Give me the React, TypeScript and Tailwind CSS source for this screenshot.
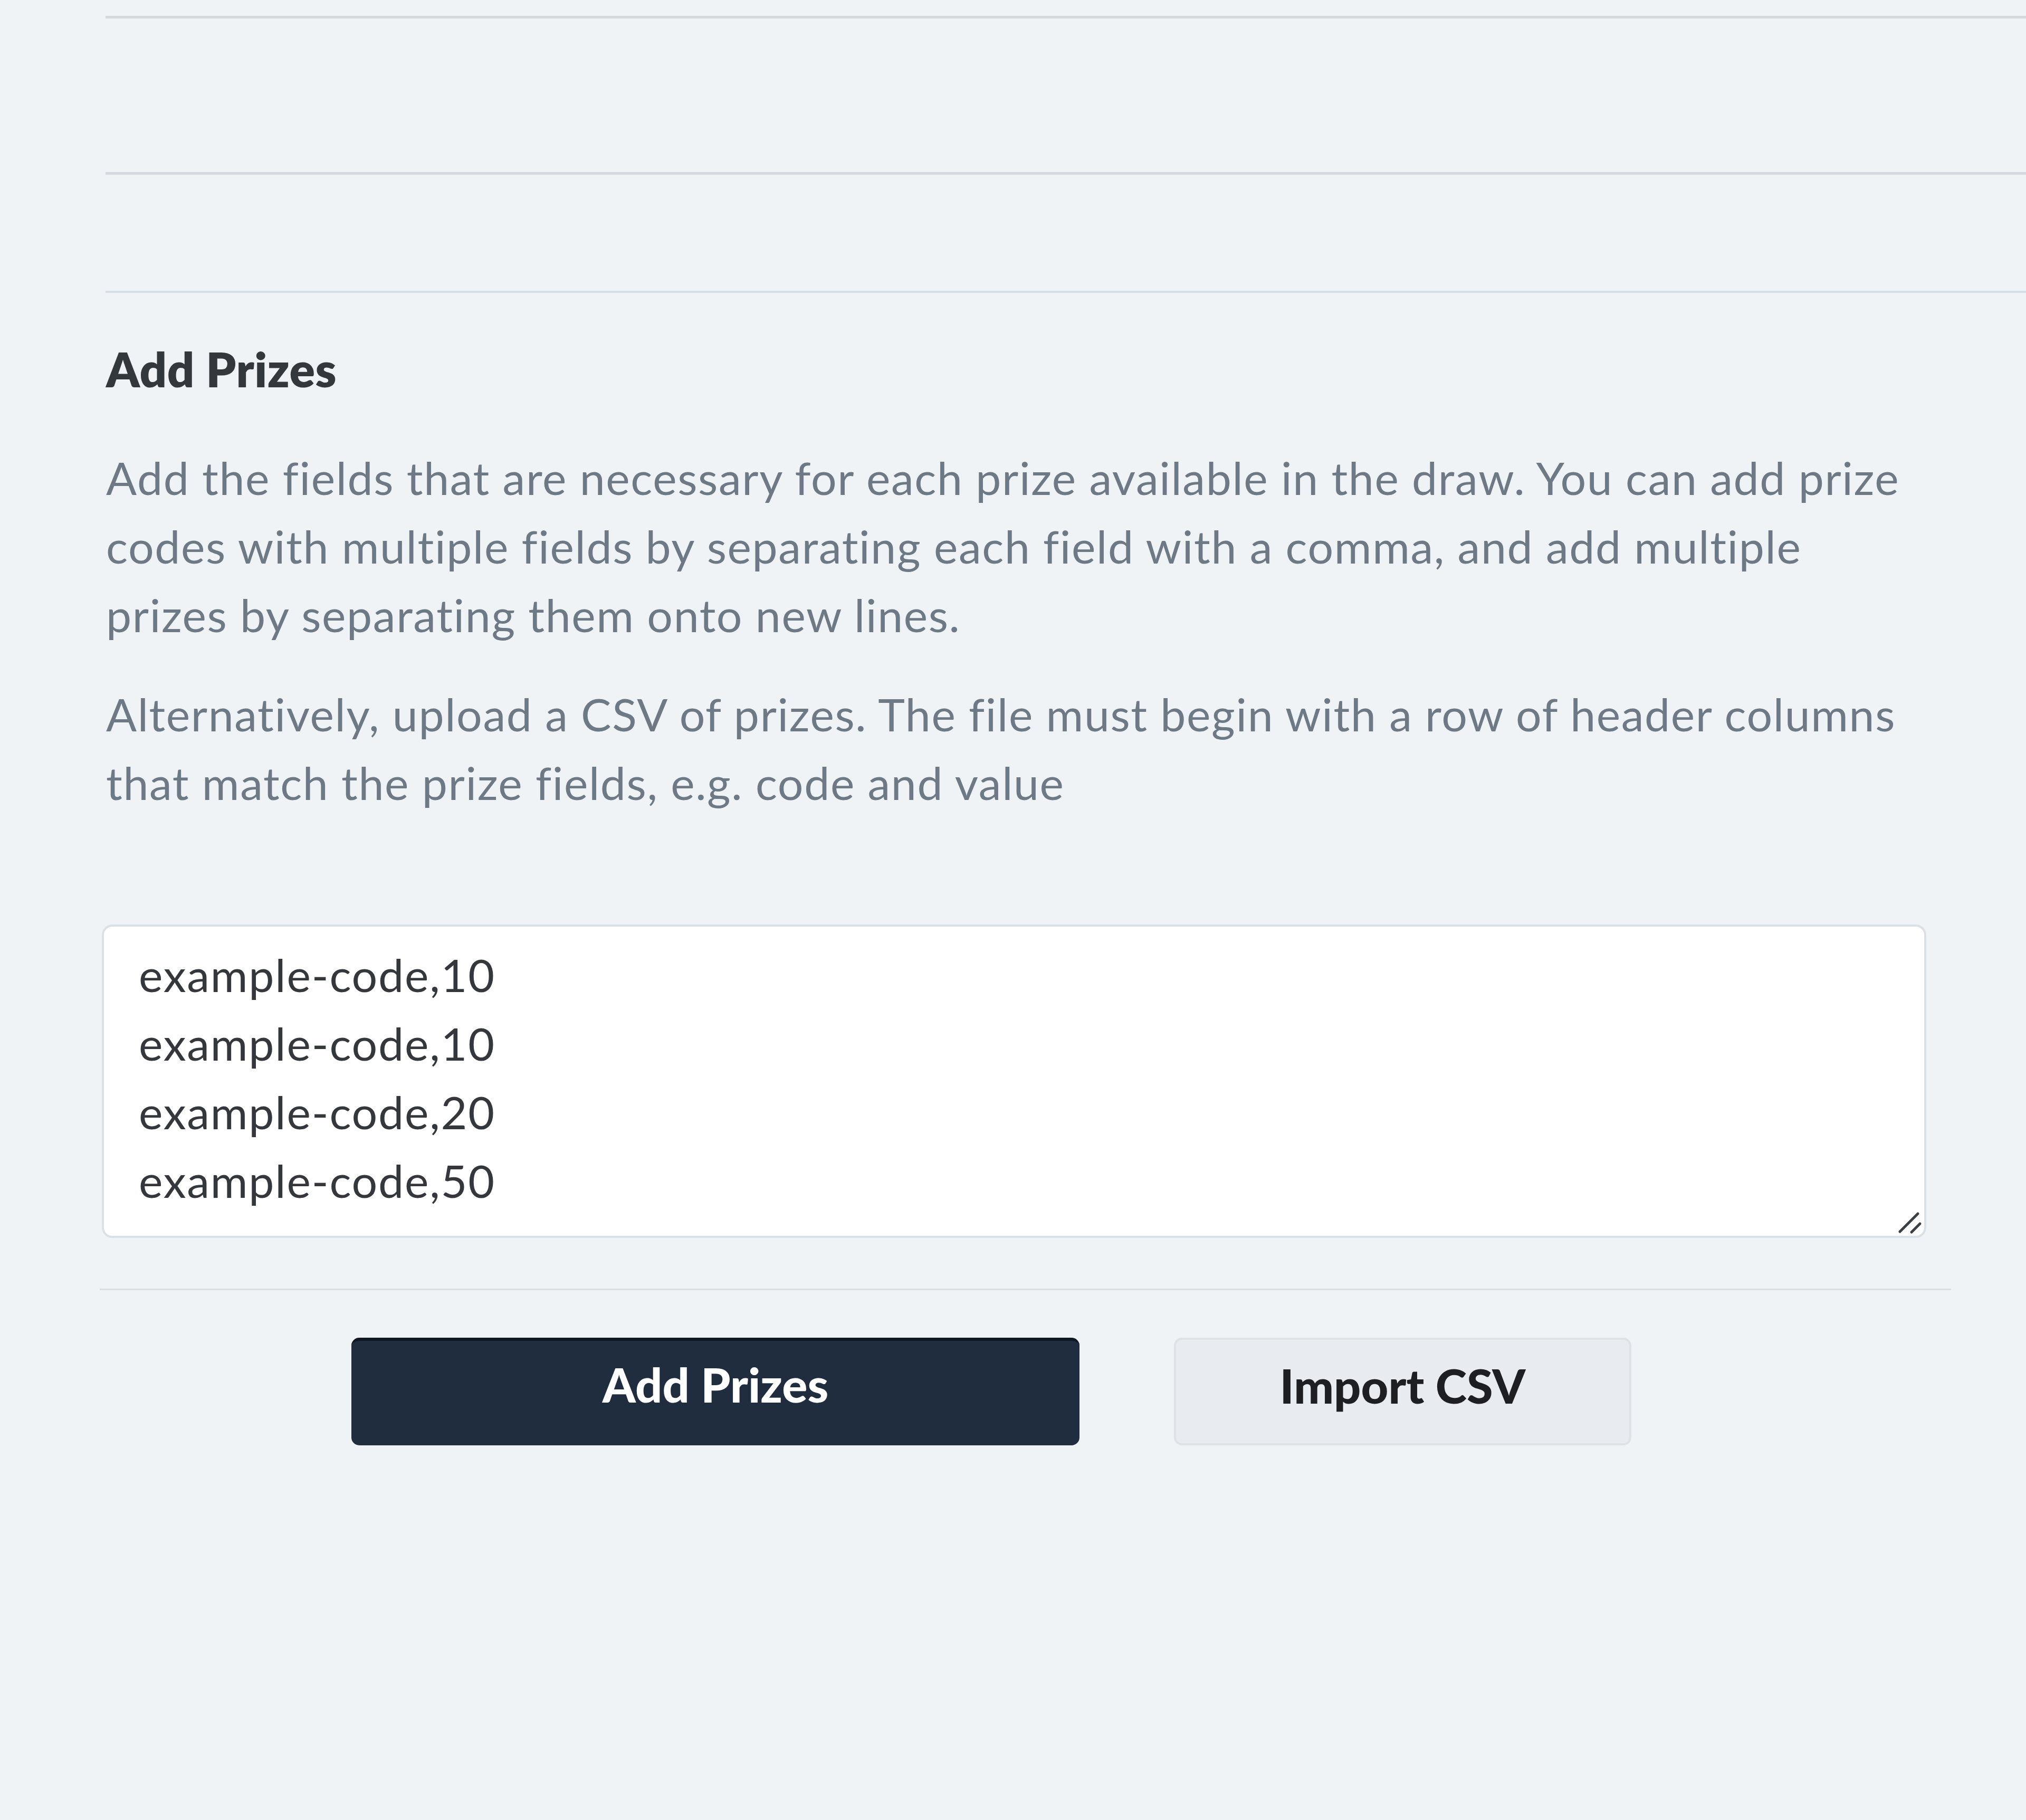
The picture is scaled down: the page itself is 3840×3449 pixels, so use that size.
import type { ReactNode } from "react";

const rows = ["example-code,10", "example-code,10", "example-code,20", "example-code,50"];

function Paragraph({ children, className = "" }: { children: ReactNode; className?: string }) {
  return (
    <p className={`text-[86px] leading-[130px] tracking-[1.6px] text-[#6d7a86] ${className}`}>{children}</p>
  );
}

export default function App() {
  return (
    <div className="min-h-[3449px] bg-[#eff3f6] font-['Lato','Noto_Sans',sans-serif]">
      {/* previous sections, cut off at the top */}
      <div className="ml-[200px] pt-[30px]">
        <div className="h-[301px] border-y-[5px] border-[#d3d9de]" />
        <div className="h-[224px] border-b-[4px] border-[#d6e0e8]" />
      </div>

      <section className="ml-[189px] w-[3509px] pb-[700px]">
        <h2 className="mt-[90px] pl-[12px] text-[90px] font-extrabold leading-[108px] tracking-[0.5px] text-[#33383d]">
          Add Prizes
        </h2>

        <div className="mt-[87px] w-[3460px] pl-[12px]">
          <Paragraph>
            Add the fields that are necessary for each prize available in the draw. You can add prize codes with
            multiple fields by separating each field with a comma, and add multiple prizes by separating them onto
            new lines.
          </Paragraph>
          <Paragraph className="mt-[58px]">
            Alternatively, upload a CSV of prizes. The file must begin with a row of header columns that match the
            prize fields, e.g. code and value
          </Paragraph>
        </div>

        <div className="relative mt-[204px] ml-[4px] w-[3458px]">
          <textarea
            className="block h-[594px] w-full resize-none rounded-[20px] border-[4px] border-[#d9e1e7] bg-white pt-[26px] pl-[66px] text-[86px] leading-[130px] tracking-[1.8px] text-[#34383c] outline-none"
            defaultValue={rows.join("\n")}
          />
          <svg
            className="pointer-events-none absolute right-[8px] bottom-[6px] h-[48px] w-[48px]"
            viewBox="0 0 48 48"
            fill="none"
            stroke="#3b3f43"
            strokeWidth="5"
            strokeLinecap="round"
          >
            <path d="M6 42 L40 8" />
            <path d="M28 43 L44 27" />
          </svg>
        </div>

        <div className="mt-[96px] h-[3px] bg-[#d8dee3]" />

        <div className="mt-[90px] flex gap-[179px] pl-[477px]">
          <button className="h-[204px] w-[1380px] rounded-[15px] border-t-[6px] border-[#0f1721] bg-[#1f2d3e] pb-[34px] text-[90px] font-black text-white">
            Add Prizes
          </button>
          <button className="h-[204px] w-[867px] rounded-[15px] border-[4px] border-[#dde2e7] bg-[#e8ebef] pb-[24px] text-[90px] font-black text-[#1d1f22]">
            Import CSV
          </button>
        </div>
      </section>
    </div>
  );
}
